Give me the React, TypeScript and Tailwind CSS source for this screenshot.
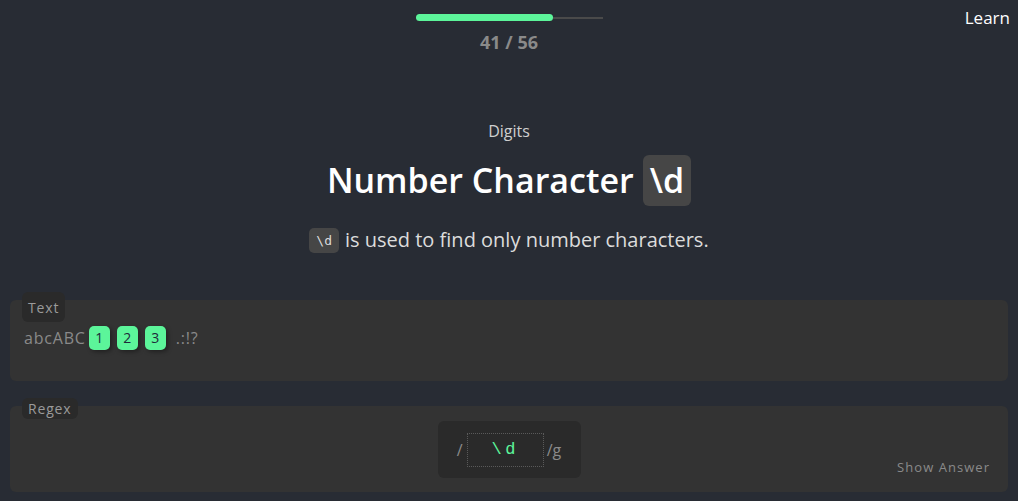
export default function App() {
  const font = { fontFamily: '"Open Sans", "Noto Sans", sans-serif' };
  const mono = { fontFamily: '"Liberation Mono", "DejaVu Sans Mono", monospace' };
  return (
    <div className="min-h-[501px] w-full bg-[#282c34] text-white" style={font}>
      <header className="relative flex flex-col items-center pt-[14px]">
        <div className="relative flex h-[7px] w-[187px] items-center">
          <div className="h-[2px] w-full bg-[#4a4a4a]" />
          <div className="absolute left-0 top-0 h-[7px] w-[137px] rounded-full bg-[#5cf59a]" />
        </div>
        <div className="mt-[10px] text-[18px] font-bold leading-[22px] text-[#8a8a8a]">41 / 56</div>
        <a className="absolute right-[8px] top-[7px] text-[17px] leading-[22px] text-white">Learn</a>
      </header>

      <section className="mt-[68px] flex flex-col items-center">
        <div className="text-[16px] leading-[20px] text-[#cfcfcf]">Digits</div>
        <h1 className="mt-[14px] flex items-center gap-[9px] text-[34px] font-semibold leading-[51px]">
          <span>Number Character</span>
          <code className="rounded-[6px] bg-[#464646] px-[7px] text-[34px] font-semibold leading-[51px]" style={font}>
            \d
          </code>
        </h1>
        <p className="mt-[21px] flex items-center gap-[6px] text-[20px] leading-[26px] text-[#dcdcdc]">
          <code
            className="rounded-[5px] bg-[#464646] px-[7px] leading-[25px] text-[#dcdcdc]"
            style={{ fontFamily: '"DejaVu Sans Mono", monospace', fontSize: 13 }}
          >
            \d
          </code>
          <span>is used to find only number characters.</span>
        </p>
      </section>

      <section className="relative mx-[10px] mt-[47px] h-[81px] rounded-[6px] bg-[#333333] px-[14px] pt-[26px]">
        <span className="absolute left-[12px] top-[-8px] flex h-[30px] items-center rounded-[6px] bg-[#2a2a2a] px-[6px] text-[14px] tracking-[0.06em] text-[#9a9a9a]">
          Text
        </span>
        <div className="flex items-center text-[16px] leading-[24px] tracking-[0.05em] text-[#8a8a8a]">
          <span>abcABC</span>
          {["1", "2", "3"].map((d, i) => (
            <span
              key={d}
              className={`${i === 0 ? "ml-[3px]" : "ml-[7px]"} flex h-[24px] w-[21px] items-center justify-center rounded-[5px] bg-[#5cf59a] text-[14px] tracking-normal text-[#1e2a3a] shadow-[2px_2px_4px_rgba(0,0,0,0.35)]`}
            >
              {d}
            </span>
          ))}
          <span className="ml-[10px]">.:!?</span>
        </div>
      </section>

      <section className="relative mx-[10px] mt-[25px] h-[86px] rounded-[6px] bg-[#333333] pt-[15px]">
        <span className="absolute left-[12px] top-[-8px] flex h-[21px] items-center rounded-[6px] bg-[#2a2a2a] px-[6px] text-[14px] tracking-[0.06em] text-[#9a9a9a]">
          Regex
        </span>
        <div className="flex justify-center">
          <div className="flex h-[57px] w-[143px] items-center justify-center rounded-[6px] bg-[#2a2a2a] text-[16px] text-[#8a8a8a]">
            <span className="mr-[4px]">/</span>
            <div
              className="flex h-[34px] w-[77px] items-center justify-center border border-dotted border-[#5a5a5a] text-[17px] tracking-[0.2em] text-[#5cf59a]"
              style={mono}
            >
              \d
            </div>
            <span className="ml-[3px]">/g</span>
          </div>
        </div>
        <span className="absolute bottom-[16px] right-[18px] text-[13px] leading-[18px] tracking-[0.08em] text-[#8a8a8a]">
          Show Answer
        </span>
      </section>
    </div>
  );
}
